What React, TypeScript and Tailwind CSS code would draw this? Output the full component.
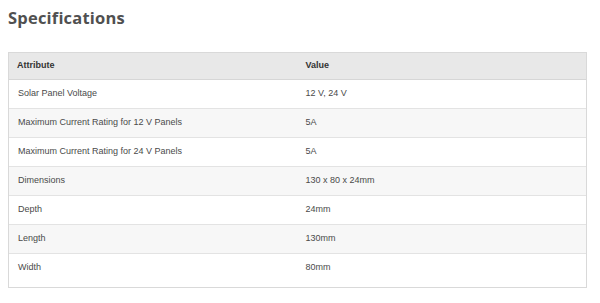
import React from "react";

const rows: [string, string][] = [
  ["Solar Panel Voltage", "12 V, 24 V"],
  ["Maximum Current Rating for 12 V Panels", "5A"],
  ["Maximum Current Rating for 24 V Panels", "5A"],
  ["Dimensions", "130 x 80 x 24mm"],
  ["Depth", "24mm"],
  ["Length", "130mm"],
  ["Width", "80mm"],
];

export default function App() {
  return (
    <div className="w-[600px] h-[303px] bg-white px-2 pt-[7px]" style={{ fontFamily: '"Liberation Sans", Arial, sans-serif' }}>
      <h2
        className="text-[16.5px] font-bold leading-[22px] text-[#505050] tracking-[0.2px]"
        style={{ fontFamily: '"Open Sans", "Liberation Sans", sans-serif' }}
      >
        Specifications
      </h2>
      <div className="mt-[23px] w-[579px] border border-[#d9d9d9] pb-[5px]">
        <table className="w-full border-collapse text-[9px]">
          <thead>
            <tr className="bg-[#e8e8e8] border-b border-[#d6d6d6]">
              <th className="w-1/2 h-[26px] pl-[8px] text-left font-bold text-[#333]">Attribute</th>
              <th className="w-1/2 h-[26px] pl-[8px] text-left font-bold text-[#333]">Value</th>
            </tr>
          </thead>
          <tbody>
            {rows.map(([a, v], i) => (
              <tr
                key={a}
                className={`${i % 2 === 1 ? "bg-[#f7f7f7]" : "bg-white"} ${i < rows.length - 1 ? "border-b border-[#e3e3e3]" : ""}`}
              >
                <td className="h-[29px] pl-[9px] text-[#4a4a4a]">{a}</td>
                <td className="h-[29px] pl-[8px] text-[#4a4a4a]">{v}</td>
              </tr>
            ))}
          </tbody>
        </table>
      </div>
    </div>
  );
}
